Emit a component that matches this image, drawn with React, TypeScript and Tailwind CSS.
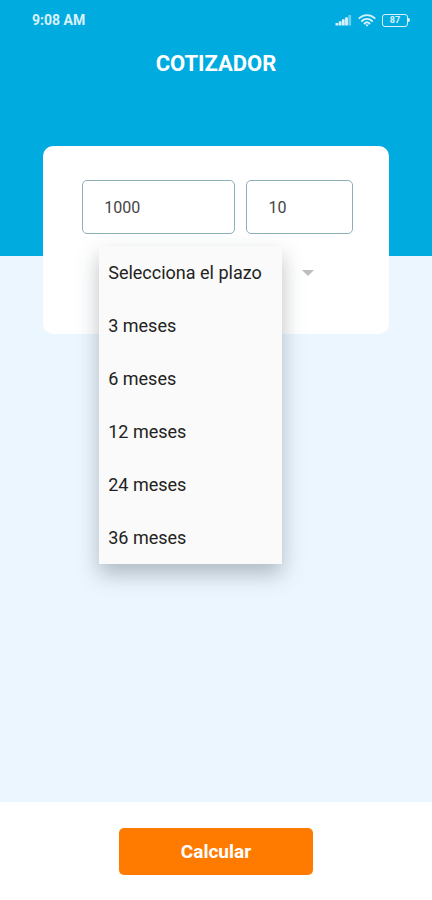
import { useState } from 'react';

const terms = [
  { value: '', label: 'Selecciona el plazo' },
  { value: '3', label: '3 meses' },
  { value: '6', label: '6 meses' },
  { value: '12', label: '12 meses' },
  { value: '24', label: '24 meses' },
  { value: '36', label: '36 meses' },
];

function StatusBar() {
  return (
    <div className="flex h-10 items-center justify-between pr-[22px] pl-8 text-sm font-bold text-white/85">
      <span>9:08 AM</span>
      <div className="flex items-center gap-1.5">
        {/* Signal */}
        <svg width="17" height="12" viewBox="0 0 17 12" fill="currentColor" aria-hidden="true">
          <rect x="0.5" y="9" width="2.8" height="2.5" rx="0.6" />
          <rect x="3.7" y="7.3" width="2.8" height="4.2" rx="0.6" />
          <rect x="6.9" y="5.3" width="2.8" height="6.2" rx="0.6" />
          <rect x="10.1" y="3.3" width="2.8" height="8.2" rx="0.6" />
          <rect x="13.3" y="1" width="2.8" height="10.5" rx="0.6" opacity="0.5" />
        </svg>
        {/* Wifi */}
        <svg
          width="18"
          height="13"
          viewBox="0 0 18 13"
          fill="none"
          stroke="currentColor"
          strokeWidth="1.8"
          strokeLinecap="round"
          aria-hidden="true"
        >
          <path d="M1.3 4.2c4.3-4.2 11.1-4.2 15.4 0" />
          <path d="M3.9 7c2.9-2.8 7.3-2.8 10.2 0" />
          <path d="M6.4 9.5c1.5-1.4 3.7-1.4 5.2 0" />
          <path d="M7.2 10.6h3.6L9 12.8z" fill="currentColor" stroke="none" />
        </svg>
        {/* Battery */}
        <div className="flex items-center">
          <span className="flex h-[13px] w-[26px] items-center justify-center rounded-[3px] border border-white/85 text-[9px] leading-none">
            87
          </span>
          <span className="h-1 w-0.5 rounded-r-sm bg-white/85" />
        </div>
      </div>
    </div>
  );
}

export default function App() {
  const [amount, setAmount] = useState('1000');
  const [rate, setRate] = useState('10');
  const [term, setTerm] = useState('');
  const [isOpen, setIsOpen] = useState(true);

  const handleTerm = (value: string) => {
    setTerm(value);
    setIsOpen(false);
  };

  return (
    <div className="flex min-h-screen flex-col bg-[#ecf6fe] font-[Roboto,sans-serif]">
      <header className="h-64 bg-[#00abe0]">
        <StatusBar />
        <h1 className="pt-2 text-center text-[22px] leading-8 font-bold text-white">COTIZADOR</h1>
      </header>

      <main className="flex-1">
        <form
          id="quote"
          onSubmit={(e) => e.preventDefault()}
          className="relative mx-[10%] -mt-[110px] h-[188px] rounded-[10px] bg-white pt-[34px] pr-9 pl-[39px]"
        >
          {/* Amount and rate */}
          <div className="flex gap-[11px]">
            <input
              aria-label="Cantidad"
              inputMode="numeric"
              value={amount}
              onChange={(e) => setAmount(e.target.value)}
              className="h-[54px] w-0 flex-[7] rounded-[5px] border border-[#8db0b8] px-[21px] text-base text-[#444] outline-none"
            />
            <input
              aria-label="Interés"
              inputMode="numeric"
              value={rate}
              onChange={(e) => setRate(e.target.value)}
              className="h-[54px] w-0 flex-[4] rounded-[5px] border border-[#8db0b8] px-[21px] text-base text-[#444] outline-none"
            />
          </div>

          {/* Term picker */}
          <div className="relative mr-[19px] ml-[17px] mt-3 h-[53px]">
            <select
              aria-label="Plazo"
              size={isOpen ? terms.length : 1}
              value={term}
              onChange={(e) => handleTerm(e.target.value)}
              className="absolute top-0 left-0 z-10 h-auto w-[183px] appearance-none overflow-hidden bg-[#fafafa] text-lg text-[#222] shadow-[0_10px_20px_rgba(60,75,85,0.35)] outline-none"
            >
              {terms.map((t) => (
                <option
                  key={t.value}
                  value={t.value}
                  className="h-[53px] px-[9px] py-4 text-[#222] checked:bg-linear-to-r checked:from-[#fafafa] checked:to-[#fafafa]"
                >
                  {t.label}
                </option>
              ))}
            </select>
            <button
              type="button"
              aria-label="Abrir plazos"
              onClick={() => setIsOpen(!isOpen)}
              className="flex h-full w-full items-center justify-end pr-5 text-[#bdbdbd]"
            >
              <svg width="12" height="6" viewBox="0 0 12 6" fill="currentColor" aria-hidden="true">
                <path d="M0 0h12L6 6z" />
              </svg>
            </button>
          </div>
        </form>
      </main>

      <footer className="flex justify-center bg-white pt-[26px] pb-[25px]">
        <button
          type="submit"
          form="quote"
          className="h-[47px] w-[45%] rounded-[5px] bg-[#ff7b00] pt-0.5 text-[19px] font-bold text-white"
        >
          Calcular
        </button>
      </footer>
    </div>
  );
}
